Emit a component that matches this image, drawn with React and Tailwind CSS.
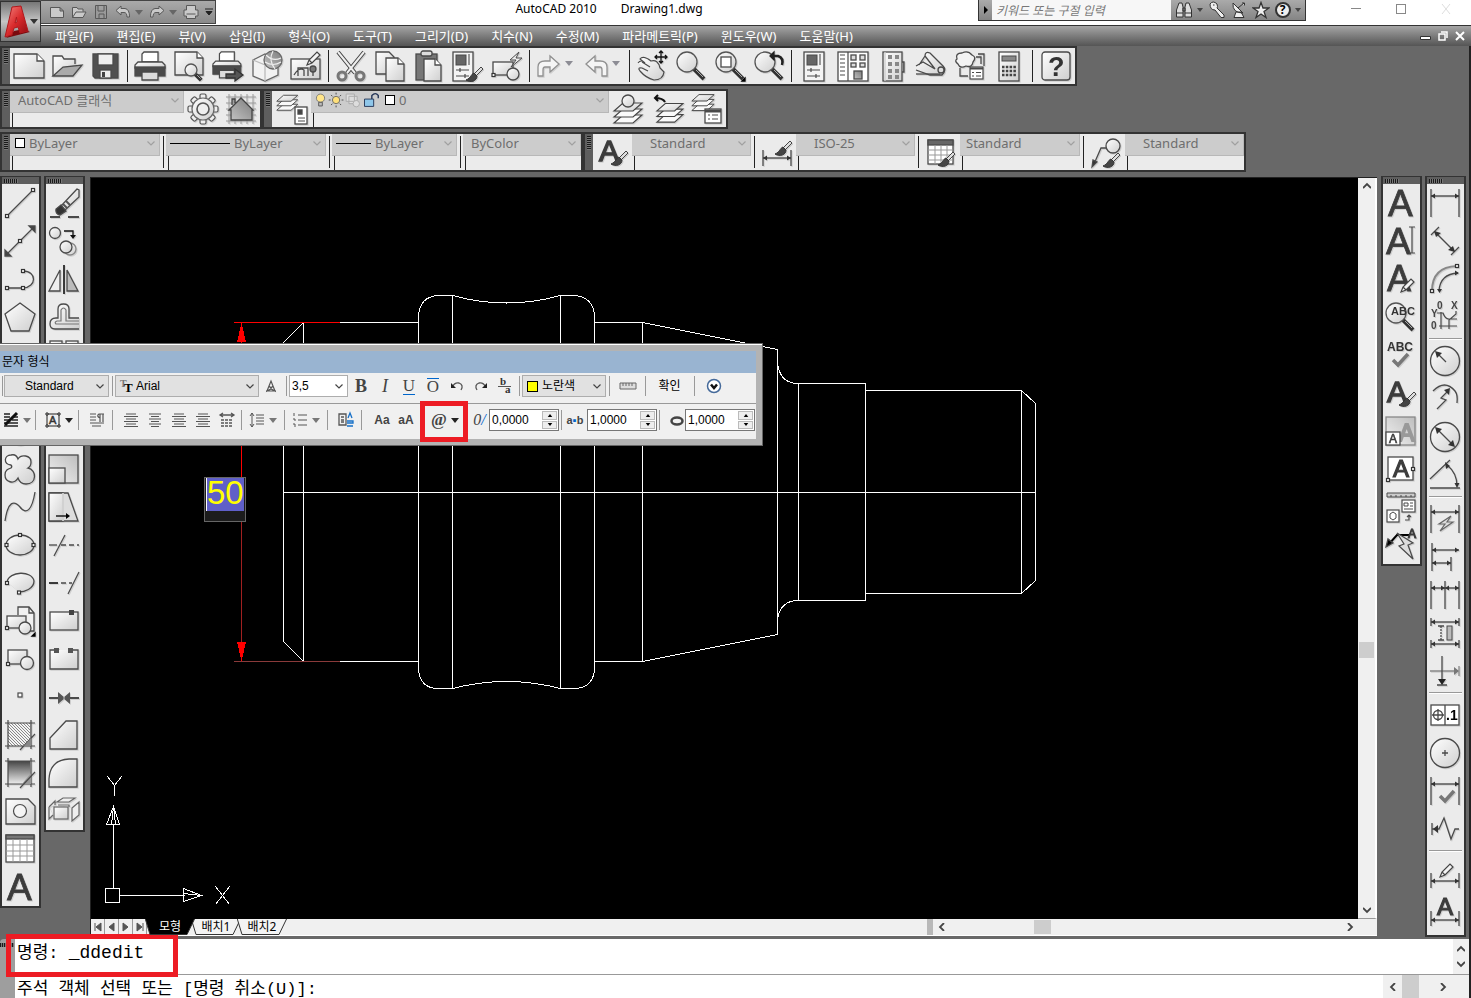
import React from "react";

const G = "url(#shade)";
const D = "url(#dark)";

const Node = ({ x, y }) => <rect x={x - 1.5} y={y - 1.5} width="3" height="3" fill="#fff" stroke="#333" strokeWidth="1.2" />;
const Brush = ({ x = 0, y = 0 }) => (
  <g transform={`translate(${x} ${y})`}>
    <path d="M15 1 L8 8 L10 10 L17 3 Z" fill="#ddd" stroke="#444" strokeWidth="1" />
    <path d="M8 7 C5 8 5 12 0 14 C5 17 11 15 11 10 Z" fill="#444" stroke="#333" strokeWidth="1" />
  </g>
);
const Pencil = ({ x = 0, y = 0 }) => (
  <path transform={`translate(${x} ${y})`} d="M1 14 L3 9 L11 1 L14 4 L6 12 Z M3 9 L6 12" fill="#f4f4f4" stroke="#444" strokeWidth="1.2" />
);
const Lens = ({ cx = 12, cy = 12, r = 10, k = 1 }) => (
  <g>
    <path d={`M${cx + r * 0.7} ${cy + r * 0.7} L${cx + r * 0.7 + 10 * k} ${cy + r * 0.7 + 10 * k}`} stroke="#333" strokeWidth="4" />
    <path d={`M${cx + r * 0.7 + 2} ${cy + r * 0.7 + 1} L${cx + r * 0.7 + 9 * k} ${cy + r * 0.7 + 9 * k - 1}`} stroke="#aaa" strokeWidth="1" />
    <circle cx={cx} cy={cy} r={r} fill={G} stroke="#555" />
  </g>
);
const Layers = ({ x = 0, y = 0, s = 1 }) => (
  <g transform={`translate(${x} ${y}) scale(${s})`} fill="#fafafa" stroke="#444" strokeWidth="1.2">
    <path d="M1 27 L10 19 H29 L20 27 Z" />
    <path d="M1 21 L10 13 H29 L20 21 Z" />
    <path d="M1 15 L10 7 H29 L20 15 Z" fill={G} />
  </g>
);
const ArrowH = ({ x1, x2, y, c = "#333" }) => (
  <g stroke={c} fill={c} strokeWidth="1.2">
    <path d={`M${x1} ${y} H${x2}`} />
    <path d={`M${x1} ${y} l4 -2.5 v5 Z M${x2} ${y} l-4 -2.5 v5 Z`} stroke="none" />
  </g>
);
const Letter = ({ x = 3, y = 29, size = 37, fill = "#3c3c3c", children = "A", w = 0.8 }) => (
  <text x={x} y={y} fontSize={size} fill={fill} stroke={fill} strokeWidth={w} fontFamily="Liberation Sans, sans-serif">{children}</text>
);
const Printer = () => (
  <g>
    <path d="M8 12 V4 L10 2 H24 V12 Z" fill="#fff" />
    <path d="M4 12 H28 L31 15 V18 H1 V15 Z" fill={G} />
    <rect x="1" y="17" width="30" height="9" fill="#4a4a4a" />
    <path d="M8 22 H24 V30 H8 Z" fill="#ddd" />
  </g>
);
const Note = ({ x, y }) => (
  <g>
    <rect x={x} y={y} width="13" height="12" fill="#fff" strokeWidth="1.2" />
    <path d={`M${x} ${y + 1.5} h13`} strokeWidth="2" />
    <path d={`M${x + 2} ${y + 5.5} h2 M${x + 6} ${y + 5.5} h5 M${x + 2} ${y + 9} h2 M${x + 6} ${y + 9} h5`} strokeWidth="1.2" />
  </g>
);
const Panel = () => (
  <g>
    <rect x="6" y="2" width="20" height="29" fill="#f4f4f4" />
    <rect x="9" y="5" width="10" height="10" fill="#666" strokeWidth="1" />
    <path d="M22 4 V15" stroke="#999" strokeWidth="2" />
    <path d="M9 20 H22 M9 26 H22 M13 18 V22 M18 24 V28" strokeWidth="1.2" />
  </g>
);

const icons = {
  new: <g><path d="M1 4 H24 L31 11 V28 H1 Z" fill={G} /><path d="M24 4 V11 H31" fill="#fff" /></g>,
  open: <g><path d="M2 26 V6 H11 L13 9 H24 V14" fill={G} /><path d="M2 26 L12 17 L31 15 L22 26 Z" fill="#aaa" /></g>,
  save: <g><path d="M4 4 H29 V28 H6 L4 26 Z" fill="#505050" /><rect x="9" y="4" width="15" height="11" fill="#eee" /><rect x="11" y="20" width="11" height="8" fill="#eee" /><rect x="13" y="22" width="3" height="5" fill="#444" stroke="none" /></g>,
  print: <Printer />,
  preview: <g><path d="M2 2 H24 L30 8 V25 H2 Z" fill={G} /><path d="M24 2 V8 H30" fill="#fff" /><Lens cx={18} cy={20} r={6} k={0.6} /></g>,
  publish: <g><g transform="scale(.93)"><Printer /></g><path d="M14 24 H23 V19 L31 25 L23 31 V28 H14 Z" fill="#555" stroke="#333" /></g>,
  dwf: <g><path d="M2 10 L14 4 L27 10 V25 L14 31 L2 26 Z" fill="#f2f2f2" stroke="#666" /><path d="M2 10 L14 15 V31" stroke="#bbb" /><circle cx="22" cy="10" r="9" fill={D} stroke="#666" /><path d="M15 5 Q22 12 30 8 M22 1 Q17 10 24 19 M14 12 Q22 17 30 12" stroke="#eee" strokeWidth="1.2" /></g>,
  render: <g><rect x="1" y="9" width="29" height="20" fill={G} /><path d="M4 25 Q9 17 14 20 V26 M8 26 V18 H18 V26 M23 26 V20" /><circle cx="23" cy="19" r="3" fill="#777" /><Pencil x={16} y={1} /></g>,
  cut: <g><path d="M3 2 L20 23 M29 2 L12 23" stroke="#444" strokeWidth="4" /><path d="M3 2 L20 23 M29 2 L12 23" stroke="#eee" strokeWidth="2" /><circle cx="7" cy="26" r="4" strokeWidth="3" stroke="#777" /><circle cx="25" cy="26" r="4" strokeWidth="3" stroke="#777" /></g>,
  copy: <g><path d="M2 2 H15 L20 7 V24 H2 Z" fill={G} /><path d="M12 8 H24 L30 14 V31 H12 Z" fill={G} /><path d="M24 8 V14 H30" fill="#fff" /></g>,
  paste: <g><rect x="3" y="4" width="21" height="26" fill="#777" /><rect x="8" y="1" width="11" height="5" rx="2" fill="#ddd" /><path d="M11 9 H22 L28 15 V31 H11 Z" fill={G} /><path d="M22 9 V15 H28" fill="#fff" /></g>,
  match: <g><g transform="translate(-5 0)"><Panel /></g><Brush x={14} y={16} /></g>,
  block: <g><rect x="2" y="12" width="20" height="13" fill={G} /><circle cx="22" cy="24" r="6" fill={G} /><Node x={2.5} y={25} /><path d="M28 2 L19 10 H25 L20 17 L31 8 H25 Z" fill="#eee" strokeWidth="1" /></g>,
  redo: <path d="M5 26 V17 Q5 11 12 11 H17 V6 L26 14 L17 22 V17 H12 Q10 17 10 20 V26 Z" fill="#f5f5f5" stroke="#909090" />,
  undo: <path d="M27 26 V17 Q27 11 20 11 H15 V6 L6 14 L15 22 V17 H20 Q22 17 22 20 V26 Z" fill="#f5f5f5" stroke="#909090" />,
  pan: <g><path d="M2 13 Q5 9 9 13 L4 9 Q7 5 15 11 Q22 9 24 18 L28 22 Q27 30 18 30 Q10 28 4 21 Q1 17 6 18 L12 21 M6 12 L14 17" fill={G} strokeWidth="1.2" /><path d="M25 1 V13 M19 7 H31 M23 3 L25 1 L27 3 M23 11 L25 13 L27 11 M21 5 L19 7 L21 9 M29 5 L31 7 L29 9" stroke="#111" /></g>,
  zoom: <Lens />,
  zoomWin: <g><Lens /><rect x="7" y="7" width="10" height="10" fill="#fff" /><path d="M31 28 V31 H28 Z" fill="#000" stroke="#000" /></g>,
  zoomPrev: <g><Lens /><path d="M19 6 H25 Q31 8 29 15" stroke="#222" strokeWidth="2.5" /><path d="M21 2 L17 6 L21 10 Z" fill="#222" stroke="#222" /></g>,
  props: <Panel />,
  design: <g><rect x="1" y="2" width="30" height="29" fill="#fff" /><path d="M11 2 V31 M3 5 H8 M3 9 H8 M3 13 H8 M3 17 H8 M3 21 H8 M3 25 H8" strokeWidth="1.2" /><rect x="14" y="5" width="5" height="5" fill="#ddd" /><rect x="23" y="5" width="5" height="5" fill="#ddd" /><rect x="14" y="13" width="5" height="4" fill="#ddd" /><rect x="23" y="13" width="5" height="4" fill="#ddd" /><rect x="17" y="21" width="8" height="8" fill={D} /></g>,
  tool: <g><rect x="7" y="2" width="19" height="29" fill={G} /><path d="M26 12 h2 v10 h-2" fill="#888" /><path d="M9 2 V31" stroke="#ccc" /><g fill="#888" stroke="none"><path d="M12 5h4v4h-4z M19 5h4v4h-4z M12 12h4v4h-4z M19 12h4v4h-4z M12 19h4v4h-4z M19 19h4v4h-4z M12 25h4v4h-4z M19 25h4v4h-4z" /></g></g>,
  sheet: <g><path d="M1 20 L15 25 H27 Q32 20 28 16 L15 3 Q10 1 10 6 L20 19 L8 12 L1 16 M10 6 L4 15" fill={G} /><circle cx="26" cy="20" r="3" fill="#ddd" /><path d="M1 24 H25" /></g>,
  markup: <g><path d="M22 7 H27 V14 M6 18 V26 H14 M24 4 H30 V16" /><path d="M3 9 Q1 3 8 3 Q14 0 18 5 Q23 7 19 12 Q18 18 12 16 Q6 19 4 14 Q0 11 3 9 Z" fill="#f3f3f3" /><g transform="translate(3 3)"><Note x={13} y={14} /></g></g>,
  calc: <g><rect x="6" y="2" width="20" height="29" fill={G} /><rect x="9" y="6" width="14" height="5" fill="#888" strokeWidth="1" /><path d="M9 17H23 M9 21H23 M9 25H23" stroke="#444" strokeWidth="2.6" strokeDasharray="2.5 1.3" /></g>,
  help: <g><rect x="2" y="2" width="28" height="28" rx="3" fill={G} /><text x="8" y="26" fontSize="27" fontWeight="bold" fill="#333" stroke="none" fontFamily="Liberation Sans, sans-serif">?</text></g>,
  gear: <g>{[0, 45, 90, 135, 180, 225, 270, 315].map((a) => <rect key={a} x="13" y="1" width="6" height="8" rx="1.5" fill="#eee" stroke="#555" strokeWidth="1.2" transform={`rotate(${a} 16 16)`} />)}<circle cx="16" cy="16" r="11" fill={G} stroke="#666" strokeWidth="1.2" /><circle cx="16" cy="16" r="6" fill="#eee" stroke="#555" strokeWidth="1.6" /></g>,
  home: <g><path d="M4 1 V31 M10 1 V31 M16 1 V31 M22 1 V31 M28 1 V31 M1 4 H31 M1 10 H31 M1 16 H31 M1 22 H31 M1 28 H31" stroke="#999" strokeWidth="1" /><path d="M7 12 V6 H10 V10 M4 17 L16 5 L28 17 H27 V27 H6 V17 Z" fill={D} stroke="#444" /></g>,
  layerProps: <g><Layers s={0.75} x={0} y={-3} /><rect x="19" y="14" width="12" height="17" fill="#fff" /><path d="M22 17h4v4h-4z" fill="#444" /><path d="M22 25H29 M22 28H29" strokeWidth="1" /></g>,
  layerCur: <g><Layers y={3} /><circle cx="15" cy="8" r="6" fill={G} /></g>,
  layerPrev: <g><Layers x={4} y={4} s={0.93} /><path d="M13 9 Q11 5 3 5 M6 2 L3 5 L6 8" stroke="#111" strokeWidth="2" /></g>,
  layerState: <g><Layers s={0.8} x={0} y={-4} /><g transform="translate(0 2)"><rect x="14" y="14" width="16" height="14" fill="#fff" /><path d="M14 16H30" strokeWidth="3" /><path d="M17 20h2 M21 20h6 M17 24h2 M21 24h6" strokeWidth="1.2" /></g></g>,
  textStyle: <g><Letter x={2} y={25} size={30} w={1.4} /><Brush x={14} y={14} /></g>,
  dimStyle: <g><path d="M2 14 V30 M30 14 V30" /><ArrowH x1={2} x2={30} y={22} /><Brush x={14} y={4} /></g>,
  tableStyle: <g><rect x="3" y="4" width="25" height="24" fill="#fff" /><rect x="3" y="4" width="25" height="5" fill="#666" /><path d="M3 14H28 M3 19H28 M3 24H28 M10 9V28 M16 9V28 M22 9V28" stroke="#999" strokeWidth="1" /><Brush x={13} y={15} /></g>,
  leaderStyle: <g><circle cx="23" cy="10" r="7" fill={G} /><path d="M16 12 H11 L4 28" /><path d="M2 31 L3 24 L7 26 Z" fill="#333" /><Brush x={13} y={16} /></g>,

  line: <g><path d="M3 29 L29 3" /><Node x={3} y={29} /><Node x={29} y={3} /></g>,
  xline: <g><path d="M3 29 L29 3" /><path d="M1 31 V25 L7 31 Z M31 1 H25 L31 7 Z" fill="#444" /><Node x={16} y={16} /></g>,
  pline: <g><path d="M3 25 H19 C33 24 33 8 19 8" /><Node x={3} y={25} /><Node x={19} y={25} /><Node x={19} y={8} /></g>,
  polygon: <path d="M16 2 L31 13 L25 30 H7 L1 13 Z" fill={G} />,
  rect: <rect x="2" y="7" width="28" height="18" fill={G} />,
  arc: <path d="M3 29 Q5 5 29 4" />,
  circle: <circle cx="16" cy="16" r="14" fill={G} />,
  cloud: <path d="M7 12 C-1 11 0 2 7 2 C11 1 13 3 14 6 C17 1 27 2 27 9 C27 12 26 14 24 15 C33 17 33 31 22 31 C17 31 15 28 14 25 C10 32 1 29 1 22 C1 17 4 16 7 15 C8 14 8 13 7 12 Z" fill={G} />,
  spline: <path d="M1 30 C4 10 10 9 16 16 C22 24 28 20 31 1" />,
  ellipse: <g><ellipse cx="16" cy="16" rx="14" ry="10" fill={G} /><Node x={16} y={6} /><Node x={2.5} y={16} /><Node x={29.5} y={16} /></g>,
  ellipseArc: <g><path d="M3 15 C5 4 28 3 30 14 C30 22 20 25 15 25" fill={G} /><Node x={3} y={16} /><Node x={15} y={25.5} /></g>,
  insert: <g><path d="M14 10 V2 H25 L30 8 V26 H20" fill="#f0f0f0" /><path d="M25 2 V8 H30" /><rect x="3" y="11" width="19" height="12" fill={G} /><circle cx="21" cy="23" r="6" fill={G} /><path d="M31 28 V31 H28 Z" fill="#000" stroke="#000" /><Node x={3} y={23} /></g>,
  makeBlock: <g><rect x="4" y="7" width="19" height="14" fill={G} /><circle cx="23" cy="20" r="6.5" fill={G} /><Node x={4} y={21} /></g>,
  point: <rect x="14" y="12" width="4" height="4" fill="#fff" strokeWidth="1.2" />,
  hatch: <g><rect x="4" y="4" width="22" height="23" fill="url(#hatchp)" stroke="none" /><path d="M4 1 V30 M1 4 H31 M27 1 V30 M1 27 H31 M16 31 L31 15" strokeWidth="1.2" /><path d="M20 27 L27 19 V27 Z" fill="#888" stroke="none" /></g>,
  gradient: <g><rect x="4" y="4" width="22" height="23" fill="url(#deep)" stroke="none" /><path d="M4 1 V30 M1 4 H31 M27 1 V30 M1 27 H31" strokeWidth="1.2" /><path d="M18 27 L27 16 V27 Z" fill="#999" stroke="none" /><path d="M16 31 L31 15" strokeWidth="1.2" /></g>,
  region: <g><path d="M2 4 H24 L31 11 V29 H2 Z" fill={G} /><circle cx="16" cy="16" r="6.5" fill="#f4f4f4" strokeWidth="1.2" /></g>,
  table: <g><rect x="2" y="2" width="28" height="27" fill="#fff" /><rect x="2" y="2" width="28" height="4" fill="#777" /><path d="M2 12H30 M2 18H30 M2 23H30 M9 6V29 M16 6V29 M23 6V29" stroke="#999" strokeWidth="1" /></g>,
  mtext: <Letter />,

  erase: <g><path d="M2 30 H12 M20 30 H31" strokeWidth="2" /><path d="M29 2 L13 19 L17 23 L31 10 V3 Z" fill={G} /><path d="M15 17 L19 21 M18 14 L22 18" stroke="#555" strokeWidth="2" /><path d="M13 18 L8 22 Q7 27 12 28 L18 24 Z" fill="#333" /></g>,
  copyObj: <g><circle cx="7" cy="8" r="5.5" fill={G} /><circle cx="22" cy="24" r="6" fill={G} stroke="#888" /><circle cx="18" cy="22" r="6" fill={G} /><path d="M16 6 H25 V11" stroke="#111" /><path d="M22 10 H28 L25 14 Z" fill="#111" stroke="none" /></g>,
  mirror: <g><path d="M12 7 V28 H1 Z" fill="#eee" /><path d="M19 7 V28 H30 Z" fill="#bbb" /><path d="M16 2 V31" stroke="#000" strokeWidth="1.5" /></g>,
  offset: <g><path d="M31 28 H7 Q2 28 2 23 Q2 17 8 17 H10 V8 Q10 3 15.5 3 Q21 3 21 8 V17 H31" fill={G} /><path d="M31 23 H8 Q6 21 9 20 H13 V9 Q15.5 5 18 9 V20 H31" stroke="#777" strokeWidth="1.2" /></g>,
  array: <g><rect x="2" y="2" width="12" height="12" fill={G} /><rect x="18" y="2" width="12" height="12" fill={G} /><rect x="2" y="18" width="12" height="12" fill={G} /><rect x="18" y="18" width="12" height="12" fill={G} /></g>,
  move: <path d="M16 2 V30 M2 16 H30" />,
  rotate: <path d="M16 3 A13 13 0 1 0 29 16" />,
  scale: <g><rect x="1" y="2" width="29" height="28" fill="url(#mid)" /><rect x="1" y="15" width="16" height="15" fill={G} /></g>,
  stretch: <g><path d="M1 2 H20 L30 30 H1 Z" fill="#ddd" /><path d="M1 2 H15 V30 H1 Z" fill={G} /><path d="M15 2 V30" stroke="#fff" /><path d="M8 25 H20" stroke="#000" /><path d="M18 22 L22 25 L18 28 Z" fill="#000" stroke="none" /></g>,
  trim: <g><path d="M1 16 H9" /><path d="M13 16 H31" strokeDasharray="5 3" /><path d="M6 27 L17 6" /></g>,
  extend: <g><path d="M1 16 H10" stroke="#000" strokeWidth="1.5" /><path d="M13 16 H24" strokeDasharray="5 3" /><path d="M20 27 L31 5" /></g>,
  breakPt: <g><rect x="2" y="7" width="28" height="18" fill={G} /><rect x="21" y="5" width="5" height="5" fill="#444" stroke="none" /></g>,
  breakGap: <g><path d="M8 7 H2 V26 H30 V7 H24" fill={G} /><path d="M6 5h5v5h-5z M20 5h5v5h-5z" fill="#555" stroke="none" /></g>,
  join: <g><path d="M1 17 H12 M20 17 H31" strokeWidth="2" /><path d="M10 11 L17 17 L10 23 Z M22 11 L15 17 L22 23 Z" fill="#555" stroke="none" /></g>,
  chamfer: <path d="M2 30 V19 L18 2 H29 V30 Z" fill={G} />,
  fillet: <path d="M1 30 V22 Q2 3 21 2 H29 V30 Z" fill={G} />,
  explode: <g stroke="#666" strokeWidth="1.2"><path d="M9 7 L15 3 H27 L21 7 Z M1 12 L7 6 V10 M1 12 V24 L5 20 M24 13 L31 7 V20 L24 26 Z M10 10 H21 V12" fill="#eee" /><rect x="6" y="12" width="14" height="12" fill={G} /></g>,

  textEdit: <g><Letter x={1} size={37} /><path d="M24 2 H30 M27 2 V28 M24 28 H30" strokeWidth="1.2" /></g>,
  textPen: <g><Letter x={2} y={28} size={36} /><Pencil x={15} y={15} /></g>,
  find: <g><Lens cx={11} cy={12} r={10} /><text x="6" y="14" fontSize="11" fontWeight="bold" fill="#333" stroke="none" fontFamily="Liberation Sans, sans-serif">ABC</text></g>,
  spell: <g><text x="2" y="12" fontSize="12" fontWeight="bold" fill="#333" stroke="none" fontFamily="Liberation Sans, sans-serif">ABC</text><path d="M8 21 L13 26 L23 15" stroke="#777" strokeWidth="3.5" /></g>,
  scaleText: <g><rect x="1" y="2" width="29" height="28" fill="url(#mid)" stroke="#888" /><Letter x={14} y={26} size={23} fill="#999" w={2} /><rect x="1" y="17" width="14" height="13" fill="#fff" /><Letter x={4} y={28} size={12} w={0.6} /></g>,
  justify: <g><rect x="3" y="4" width="25" height="23" fill="#fff" /><Letter x={8} y={24} size={24} w={1.2} /><Node x={3} y={27} /><Node x={28} y={16} /></g>,
  spaceTrans: <g><path d="M2 2 H30 V6 H2 Z M6 4 V6 M11 4 V6 M16 4 V6 M21 4 V6 M26 4 V6" strokeWidth="1" fill="#ccc" /><rect x="17" y="9" width="13" height="12" fill="#fff" strokeWidth="1.2" /><path d="M19 12h4v3h-4z M25 12h3 M25 15h3 M19 18h9" strokeWidth="1" /><rect x="2" y="19" width="12" height="12" fill="#fff" strokeWidth="1.2" /><path d="M5 23 L8 21 L11 23 V27 L8 29 L5 27 Z" strokeWidth="1" /><path d="M20 29 H24 V24 M22 26 L24 24 L26 26" strokeWidth="1.2" /></g>,
  annoUpdate: <g><path d="M3 16 L12 6 H24" stroke="#000" strokeWidth="2" /><path d="M1 18 L3 10 L8 14 Z" fill="#000" /><Letter x={23} y={9} size={12} w={1} /><path d="M12 4 L28 14 L23 16 L28 30 L14 17 L19 15 Z" fill="#ddd" strokeWidth="1.2" /></g>,

  dLinear: <g><path d="M2 2 V30 M30 2 V30" /><ArrowH x1={2} x2={30} y={9} /></g>,
  dAligned: <g><path d="M2 10 L10 2 M22 30 L30 22 M6 7 L25 26" /><path d="M5 6 L12 8 L7 12 Z M26 27 L19 25 L24 21 Z" fill="#333" stroke="none" /></g>,
  dArc: <g><path d="M3 28 Q3 4 28 3" stroke="#888" strokeWidth="2" /><path d="M10 28 Q11 11 29 10" /><path d="M8 26 H13 L10.5 30 Z M26 7.500 V12.500 L30 10 Z" fill="#333" stroke="none" /><Node x={3} y={28} /><Node x={28} y={3} /></g>,
  dOrd: <g fontFamily="Liberation Sans, sans-serif"><g fontSize="10" fontWeight="bold" fill="#444" stroke="none"><text x="8" y="8">0</text><text x="22" y="8">X</text><text x="2" y="16">Y</text><text x="2" y="28">0</text></g><path d="M12 11 V28 M10 25 H28 M8 12 H14 Q16 18 20 18 H28 M27 10 V13 L20 19 V28" strokeWidth="1.2" /></g>,
  dRadius: <g><circle cx="16" cy="16" r="14.5" fill={G} /><path d="M8 8 L17 17" /><path d="M6 6 L13 8 L8 13 Z" fill="#333" stroke="none" /></g>,
  dJog: <g><path d="M4 8 Q16 -4 26 8 Q29 12 28 20 M8 26 L17 17 L12 15 L19 8" /><path d="M21 5 L20 12 L15 7 Z" fill="#333" stroke="none" /></g>,
  dDia: <g><circle cx="16" cy="16" r="14.5" fill={G} /><path d="M8 8 L24 24" /><path d="M6 6 L13 8 L8 13 Z M26 26 L19 24 L24 19 Z" fill="#333" stroke="none" /></g>,
  dAng: <g><path d="M1 29 H31 M1 20 L21 1 M18 6 Q28 14 28 27" /><path d="M16 3 L21 7 L17 10 Z M25.500 24 H30.500 L28 29 Z" fill="#333" stroke="none" /></g>,
  dQuick: <g><path d="M2 2 V30 M30 2 V30" /><ArrowH x1={2} x2={30} y={9} /><path d="M22 13 L10 21 H16 L11 28 L24 19 H18 Z" fill="#ddd" stroke="#666" strokeWidth="1.2" /></g>,
  dBase: <g><path d="M3 2 V30 M22 16 V30" /><ArrowH x1={3} x2={30} y={9} /><ArrowH x1={3} x2={22} y={22} /></g>,
  dCont: <g><path d="M2 2 V30 M16 2 V30 M30 2 V30" /><ArrowH x1={2} x2={16} y={9} /><ArrowH x1={16} x2={30} y={9} /></g>,
  dSpace: <g><path d="M2 1 V9 M30 1 V9 M2 23 V31 M30 23 V31" /><ArrowH x1={2} x2={30} y={5} /><ArrowH x1={2} x2={30} y={27} /><path d="M12 9 V23" strokeDasharray="2 1" /><path d="M9 9 H15 M9 23 H15" /><rect x="18" y="9" width="5" height="14" fill="#bbb" strokeWidth="1" /></g>,
  dBreak: <g><path d="M1 16 H29 M30 11 V21" stroke="#888" /><path d="M25 12 L30 16 L25 20 Z" fill="#777" stroke="none" /><path d="M13 1 V27 M8 30 H18" /><path d="M9 24 H17 L13 30 Z" fill="#222" stroke="none" /></g>,
  tol: <g><rect x="2" y="6" width="28" height="20" fill="#fff" /><path d="M16 6 V26 M3 16 H15 M9 10 V22" /><circle cx="9" cy="16" r="4.5" /><text x="17" y="21" fontSize="14" fontWeight="bold" fill="#000" stroke="none" fontFamily="Liberation Sans, sans-serif">.1</text></g>,
  center: <g><circle cx="16" cy="16" r="14.5" fill={G} /><path d="M16 13 V19 M13 16 H19" /></g>,
  inspect: <g><path d="M2 2 V30 M30 2 V30" /><ArrowH x1={2} x2={30} y={9} /><path d="M11 21 L16 26 L25 16" stroke="#777" strokeWidth="3.5" /></g>,
  jogLine: <g><path d="M3 10 V22 M3 16 H10 L15 5 L22 26 L26 16 H30" /><path d="M4 16 L9 12 V20 Z" fill="#333" stroke="none" /></g>,
  dEdit: <g><path d="M2 16 V31 M30 16 V31" /><ArrowH x1={2} x2={30} y={24} /><Pencil x={10} y={6} /></g>,
  dText: <g><path d="M2 16 V31 M30 16 V31" /><ArrowH x1={2} x2={30} y={25} /><Letter x={8} y={20} size={24} w={1.2} /></g>,
};

function Icon({ name, size = "size-8" }) {
  return (
    <svg viewBox="0 0 32 32" className={`${size} shrink-0 overflow-visible drop-shadow-[1px_1px_0_rgba(0,0,0,0.12)]`} fill="none" stroke="#4a4a4a" strokeWidth="1.3" aria-hidden="true">
      {icons[name]}
    </svg>
  );
}

function Defs() {
  return (
    <svg className="absolute size-0" aria-hidden="true">
      <defs>
        <linearGradient id="shade" x1="0" y1="0" x2="1" y2="1"><stop offset="0" stopColor="#ffffff" /><stop offset="1" stopColor="#cfcfcf" /></linearGradient>
        <linearGradient id="mid" x1="1" y1="0" x2="0" y2="1"><stop offset="0" stopColor="#bdbdbd" /><stop offset="1" stopColor="#f2f2f2" /></linearGradient>
        <linearGradient id="dark" x1="0" y1="1" x2="1" y2="0"><stop offset="0" stopColor="#c4c4c4" /><stop offset="1" stopColor="#7c7c7c" /></linearGradient>
        <linearGradient id="deep" x1="0" y1="0" x2="0" y2="1"><stop offset="0" stopColor="#444" /><stop offset="1" stopColor="#eee" /></linearGradient>
        <linearGradient id="red" x1="0" y1="0" x2="1" y2="1"><stop offset="0" stopColor="#f58a84" /><stop offset=".5" stopColor="#d92a2c" /><stop offset="1" stopColor="#8c0a10" /></linearGradient>
        <pattern id="hatchp" width="3" height="3" patternUnits="userSpaceOnUse"><rect width="3" height="3" fill="#f4f4f4" /><path d="M0 0 L3 3" stroke="#888" strokeWidth="1" /></pattern>
      </defs>
    </svg>
  );
}

const Tool = ({ name, w = "w-[39px]" }) => (
  <button type="button" aria-label={name} className={`${w} flex shrink-0 items-center justify-center`}><Icon name={name} /></button>
);
const Sep = ({ w = "w-1.5" }) => <span className={`${w} flex shrink-0 justify-center self-stretch py-0.5`}><span className="w-px bg-[#222]" /></span>;
const Caret = ({ c = "text-[#8c8c94]" }) => (
  <svg viewBox="0 0 8 5" className={`h-[5px] w-2 shrink-0 ${c}`} aria-hidden="true"><path d="M0 0 H8 L4 5 Z" fill="currentColor" /></svg>
);
const Chevron = ({ className = "" }) => (
  <svg viewBox="0 0 8 5" className={`pointer-events-none h-[5px] w-2 shrink-0 ${className}`} aria-hidden="true"><path d="M.5 .5 L4 4 L7.5 .5" fill="none" stroke="currentColor" strokeWidth="1.2" /></svg>
);
const Dots = ({ vertical }) => vertical
  ? <span className="w-1 bg-[repeating-linear-gradient(#1a1a1a_0_1px,#777_1px_2px)]" />
  : <span className="h-1 w-3.5 bg-[repeating-linear-gradient(to_right,#1a1a1a_0_1px,#777_1px_2px)]" />;

function Bar({ children }) {
  return (
    <div role="toolbar" className="flex h-10 shrink-0 border-2 border-[#333] bg-[#ebebeb]">
      <span className="flex w-2 shrink-0 justify-center bg-[#5e5e5e] pt-0.5 pb-5"><Dots vertical /></span>
      {children}
    </div>
  );
}

function Combo({ label, value, w, pad = "pl-2", children }) {
  return (
    <div className={`${w} flex shrink-0 flex-col`}>
      <label className="relative flex h-[22px] shrink-0 items-center border-r border-b border-[#b8b8b8] bg-[#cccccc] pb-[3px]">
        <span className={`flex items-center gap-1 ${pad}`}>{children}</span>
        <select aria-label={label} defaultValue={value} className="h-[18px] min-w-0 flex-1 appearance-none bg-transparent px-1 text-[13px] leading-[18px] text-[#6e6e6e]">
          <option>{value}</option>
        </select>
        <Chevron className="mr-1 text-[#a0a0a0]" />
      </label>
      <span className="ml-0.5 h-3.5 w-px bg-[#222]" />
    </div>
  );
}

const Swatch = () => <span className="size-2.5 border border-black bg-white" />;

function Quick({ d, fill = "#c9c9c9" }) {
  return <svg viewBox="0 0 16 16" className="size-4 shrink-0" fill={fill} stroke="#585858" aria-hidden="true"><path d={d} /></svg>;
}

function Header() {
  const menus = ["파일(F)", "편집(E)", "뷰(V)", "삽입(I)", "형식(O)", "도구(T)", "그리기(D)", "치수(N)", "수정(M)", "파라메트릭(P)", "윈도우(W)", "도움말(H)"];
  return (
    <header className="flex h-[46px] shrink-0 bg-white">
      <div className="flex w-[41px] shrink-0 flex-col bg-[#555]">
        <button type="button" aria-label="Application menu" className="mt-px flex h-[41px] items-center justify-between border border-[#333] bg-gradient-to-b from-[#777] via-[#c6c6c6] to-[#777] px-[3px]">
          <svg viewBox="0 0 26 34" className="h-[34px] w-[26px] overflow-visible" aria-hidden="true">
            <path d="M2 33 L26 27 L20 24 L10 26 Z" fill="#7a0a0e" />
            <path d="M8 2 L17 1 L24 26 L16 28 L14 22 L10 23 L8 30 L1 32 Z M11 18 L13 17 L12.500 12 Z" fill="url(#red)" fillRule="evenodd" stroke="#b0181c" strokeWidth="1" />
          </svg>
          <Caret c="text-[#333]" />
        </button>
      </div>
      <div className="flex min-w-0 flex-1 flex-col">
        <div className="flex h-[25px] shrink-0">
          <div className="flex h-6 w-[175px] shrink-0 items-center gap-1.5 border border-l-0 border-[#444] bg-gradient-to-b from-[#aaa] to-[#8a8a8a] pl-2">
            <Quick d="M1.5 3.5 H11 L14.5 7 V13.5 H1.5 Z M11 3.5 V7 H14.5" />
            <Quick d="M1.5 13.5 V3.5 H6 L7 5 H12 V7.5 M1.5 13.5 L5 8 H15 L12 13.5 Z" />
            <Quick d="M2.5 1.5 H13.5 V14.5 H2.5 Z M5 1.5 V7 H11 V1.5 M6 14 V10 H11 V14" fill="#999" />
            <span className="flex items-center gap-1"><Quick d="M1 6.5 L6 2 V4.5 H10 Q14.5 5 14.5 13 H12 Q12 8.5 9 8.5 H6 V11 Z" /><Caret c="text-[#666]" /></span>
            <span className="flex items-center gap-1"><Quick d="M15 6.5 L10 2 V4.5 H6 Q1.5 5 1.5 13 H4 Q4 8.5 7 8.5 H10 V11 Z" /><Caret c="text-[#666]" /></span>
            <Quick d="M3.5 6 V1.5 H12.5 V6 H15 V12 H12.5 V14.5 H3.5 V12 H1 V6 Z M3.5 10 H12.5" />
            <svg viewBox="0 0 8 8" className="size-2 shrink-0" aria-hidden="true"><path d="M0 1 H8 M1 3.5 H7 L4 7 Z" stroke="#222" fill="#222" /></svg>
          </div>
          <h1 className="flex flex-1 justify-center gap-6 pl-6 text-[12px] leading-[18px] text-black"><span>AutoCAD 2010</span><span>Drawing1.dwg</span></h1>
          <div className="flex h-[21px] w-[328px] shrink-0 items-center border border-t-0 border-[#333] bg-gradient-to-b from-[#aaa] to-[#858585]">
            <span className="flex w-[13px] shrink-0 justify-center"><svg viewBox="0 0 4 8" className="h-2 w-1" aria-hidden="true"><path d="M0 0 L4 4 L0 8 Z" /></svg></span>
            <input aria-label="검색" placeholder="키워드 또는 구절 입력" className="h-5 w-[179px] bg-[#f7f7f7] px-1 text-[12px] italic placeholder:text-[#777]" />
            <span className="flex flex-1 items-center justify-between px-1">
              <svg viewBox="0 0 18 18" className="size-[18px]" fill="#ddd" stroke="#333" aria-hidden="true"><path d="M4 2 H7 L8 6 V16 H1.5 V9 Z M11 2 H14 L16.5 9 V16 H10 V6 Z M8 7 H10 V10 H8 Z M1.5 12 H8 M10 12 H16.5" /></svg>
              <svg viewBox="0 0 6 4" className="h-1 w-1.5" aria-hidden="true"><path d="M0 0 H6 L3 4 Z" fill="#444" /></svg>
              <svg viewBox="0 0 18 18" className="size-[18px]" fill="#eee" stroke="#333" aria-hidden="true"><path d="M2 3 Q5 -1 9 3 Q10 6 9 7 L16 14 V16.5 H13 L7 9 Q2 9 2 3 Z M5 4 h1.5" /></svg>
              <svg viewBox="0 0 18 18" className="size-[18px]" fill="#eee" stroke="#333" aria-hidden="true"><path d="M6 11 L4 16.5 H14 L11 11 Z M3 2 Q2 12 13 12 Z M8 7 L14 2 M12 2 H14.500 V4.500" /></svg>
              <svg viewBox="0 0 18 18" className="size-[18px]" fill="#eee" stroke="#333" strokeWidth="1.3" aria-hidden="true"><path d="M9 1.5 L11 7 H17 L12 10.5 L14 16.5 L9 13 L4 16.5 L6 10.5 L1 7 H7 Z" /></svg>
              <span className="flex size-4 items-center justify-center rounded-full border-2 border-[#333] bg-[#eee] text-[12px] leading-3 font-bold">?</span>
              <svg viewBox="0 0 6 4" className="h-1 w-1.5" aria-hidden="true"><path d="M0 0 H6 L3 4 Z" fill="#444" /></svg>
            </span>
          </div>
          <div className="flex w-[165px] shrink-0 items-start justify-end gap-[35px] pt-1 pr-5">
            <button type="button" aria-label="Minimize" className="h-[5px] w-2.5 border-b border-[#888]" />
            <button type="button" aria-label="Maximize" className="size-2.5 border border-[#888]" />
            <button type="button" aria-label="Close"><svg viewBox="0 0 10 10" className="size-2.5" aria-hidden="true"><path d="M1 0 L9 10 M9 0 L1 10" stroke="#ddd" /></svg></button>
          </div>
        </div>
        <nav className="flex h-[21px] shrink-0 items-center gap-[23px] border-t border-[#333] bg-gradient-to-b from-[#a6a6a6] to-[#555] pl-3.5 text-[13px] leading-4 text-white">
          {menus.map((m) => <button type="button" key={m} className="shrink-0">{m}</button>)}
          <span className="flex flex-1 items-center justify-end gap-[7px] pr-1.5">
            <svg viewBox="0 0 11 10" className="h-2.5 w-[11px]" aria-hidden="true"><path d="M.5 5.5 h10 v3 h-10 z" fill="#fff" stroke="#333" /></svg>
            <svg viewBox="0 0 10 10" className="size-2.5" aria-hidden="true"><path d="M3 1 H9 V7 M1 3 H7 V9 H1 Z" fill="none" stroke="#fff" strokeWidth="1.5" /></svg>
            <svg viewBox="0 0 10 10" className="size-2.5" aria-hidden="true"><path d="M1 1 L9 9 M9 1 L1 9" stroke="#fff" strokeWidth="2" /></svg>
          </span>
        </nav>
      </div>
    </header>
  );
}

function Toolbars() {
  const set = (names, w) => names.map((n) => <Tool key={n} name={n} w={w} />);
  return (
    <div className="flex shrink-0 flex-col items-start gap-[3px]">
      <Bar>
        {set(["new", "open", "save"], "w-[38px]")}<Sep />
        {set(["print", "preview", "publish", "dwf", "render"])}<Sep />
        {set(["cut", "copy", "paste", "match", "block"])}<Sep />
        <Tool name="redo" w="w-[33px]" /><span className="flex w-3.5 items-center pb-1.5"><Caret /></span>
        <Tool name="undo" w="w-[33px]" /><span className="flex w-3.5 items-center pb-1.5"><Caret /></span><Sep />
        {set(["pan", "zoom", "zoomWin", "zoomPrev"])}<Sep />
        {set(["props", "design", "tool", "sheet", "markup", "calc"])}<Sep w="w-2" />
        <Tool name="help" />
      </Bar>
      <div className="flex">
        <Bar>
          <Combo label="작업공간" value="AutoCAD 클래식" w="w-[174px]" pad="pl-1" />
          {set(["gear", "home"], "w-[38px]")}
        </Bar>
        <Bar>
          <Tool name="layerProps" />
          <Combo label="도면층" value="0" w="w-[298px]" pad="pl-1">
            <svg viewBox="0 0 72 16" className="h-4 w-[66px]" aria-hidden="true">
              <circle cx="6" cy="6" r="4.5" fill="#ffe58a" stroke="#777" /><path d="M4 10.5 h4 v4 h-4 z" fill="#bbb" stroke="#555" />
              <circle cx="23" cy="8" r="4" fill="#ffe07a" stroke="#666" /><path d="M23 0 V2 M23 14 V16 M15 8 H17 M29 8 H31 M17.5 2.5 L19 4 M27 12 L28.5 13.5 M28.5 2.5 L27 4 M17.5 13.5 L19 12" stroke="#444" />
              <path d="M34 1.5 h9 v8 h-9 z M37 4 h9 v8 h-9 z" fill="#ddd" stroke="#aaa" /><circle cx="45" cy="12" r="3.5" fill="#ddd" stroke="#aaa" />
              <path d="M54 7 h10 v8 h-10 z" fill="#8fc7ea" stroke="#235" /><path d="M62 7 V3 Q66 -1 69 3 V6" fill="none" stroke="#235" strokeWidth="1.5" />
            </svg>
            <Swatch />
          </Combo>
          {set(["layerCur", "layerPrev", "layerState"])}
        </Bar>
      </div>
      <div className="flex">
        <Bar>
          <Combo label="색상" value="ByLayer" w="w-[150px]" pad="pl-[5px]"><Swatch /></Combo><Sep />
          <Combo label="선종류" value="ByLayer" w="w-[160px]" pad="pl-1"><span className="h-px w-[60px] bg-black" /></Combo><Sep />
          <Combo label="선가중치" value="ByLayer" w="w-[125px]" pad="pl-1"><span className="h-px w-[35px] bg-black" /></Combo><Sep />
          <Combo label="플롯 스타일" value="ByColor" w="w-[118px]" pad="pl-1" />
        </Bar>
        <Bar>
          <Tool name="textStyle" /><Combo label="문자 스타일" value="Standard" w="w-[119px]" pad="pl-3.5" /><Sep />
          <Tool name="dimStyle" /><Combo label="치수 스타일" value="ISO-25" w="w-[119px]" pad="pl-3.5" /><Sep />
          <Tool name="tableStyle" /><Combo label="표 스타일" value="Standard" w="w-[120px]" pad="pl-0.5" /><Sep />
          <Tool name="leaderStyle" /><Combo label="지시선 스타일" value="Standard" w="w-[119px]" pad="pl-3.5" />
        </Bar>
      </div>
    </div>
  );
}

function Palette({ groups }) {
  return (
    <div role="toolbar" className="flex max-h-full w-[41px] shrink-0 flex-col overflow-hidden border-2 border-t-0 border-[#333] bg-[#ebebeb] [&>button]:pr-px">
      <span className="flex h-2 shrink-0 items-center border-t border-[#333] bg-[#5e5e5e] pl-0.5"><Dots /></span>
      {groups.map((g, i) => (
        <React.Fragment key={g[0]}>
          {i > 0 && <span className="mx-0.5 flex h-1.5 shrink-0 items-center"><span className="h-0.5 w-full border-t border-b border-t-[#999] border-b-white" /></span>}
          {g.map((n) => <button type="button" key={n} aria-label={n} className="flex h-[38px] shrink-0 items-center justify-center"><Icon name={n} /></button>)}
        </React.Fragment>
      ))}
    </div>
  );
}

function Drawing() {
  return (
    <div className="relative min-h-0 min-w-0 flex-1 overflow-hidden bg-black">
      <svg className="absolute inset-0 h-full w-full" aria-label="도면">
        <g transform="translate(-91 -178)" fill="none" stroke="#fff" strokeWidth="1" shapeRendering="crispEdges">
          <path d="M283.5 492.5 H1035.5 M303.5 322.5 L283.5 342.5 V641.5 L303.5 661.5 Z M339.5 322.5 H418.5 M339.5 661.5 H418.5" />
          <path d="M418.5 672.5 V316.5 Q419.5 296.5 438.5 295.5 H452.5 Q506.5 310.5 560.5 295.5 H575.5 Q593.5 297.5 594.5 316.5 V668.5 Q593.5 687.5 575.5 688.5 H560.5 Q506.5 674.5 452.5 688.5 H438.5 Q419.5 688.5 418.5 668.5 M452.5 295.5 V688.5 M560.5 295.5 V688.5" />
          <path d="M594.5 322.5 H642.5 V661.5 H594.5 M642.5 322.5 L777.5 349.5 V634.5 L642.5 661.5" />
          <path d="M777.5 362.5 Q779.5 383.5 798.5 383.5 H865.5 V600.5 H798.5 Q779.5 600.5 777.5 620.5 M798.5 383.5 V600.5" />
          <path d="M865.5 390.5 H1021.5 L1035.5 403.5 V580.5 L1021.5 593.5 H865.5 M1021.5 390.5 V593.5" />
          <path d="M233.5 322.5 H339.5 M241.5 340.5 V477.5" stroke="#f00" />
          <path d="M233.5 661.5 H339.5" stroke="#8a3a3a" />
          <path d="M241.5 521.5 V642.5" stroke="#a02020" />
          <path d="M241.5 323 L237 342 H246 Z M241.5 661 L237 642 H246 Z" fill="#f00" stroke="none" />
          <path d="M113.5 888.5 V824.5 M119.5 895.5 H184.5 M105.5 888.5 H119.5 V902.5 H105.5 Z M113.5 806.5 L106.5 824.5 H119.5 Z M113.5 806.5 L111.5 824.5 M113.5 806.5 L115.5 824.5 M201.5 895.5 L183.5 888.5 V901.5 Z M201.5 895.5 L183.5 893.5" />
          <path d="M107.5 776.5 L114.5 785.5 L121.5 776.5 M114.5 785.5 V795.5 M215.5 886.5 L229.5 904.5 M229.5 886.5 L215.5 904.5" />
        </g>
      </svg>
      <div className="absolute top-[299px] left-[113px] h-[45px] w-[42px] border border-[#666] bg-[#1c1c1c] pl-px">
        <span className="block h-[33px] w-[38px] border-l border-white bg-[#5f5fc8] font-[Liberation_Sans] text-[33px] leading-[29px] text-[#ff0]">50</span>
      </div>
    </div>
  );
}

function ArrowGlyph({ d }) {
  return <svg viewBox="0 0 8 8" className="size-2 shrink-0" fill="none" stroke="#444" strokeWidth="1.8" aria-hidden="true"><path d={d} /></svg>;
}
const UP = "M0 6 L4 2 L8 6", DOWN = "M0 2 L4 6 L8 2", LEFT = "M6 0 L2 4 L6 8", RIGHT = "M2 0 L6 4 L2 8";

function Tab({ children, active }) {
  return (
    <button type="button" className={`relative h-4 w-[46px] shrink-0 text-[12px] leading-4 ${active ? "z-10 text-white" : "text-black"}`}>
      <svg viewBox="0 0 50 16" className="absolute top-0 -left-0.5 h-4 w-[50px]" aria-hidden="true">
        <path d="M0 -1 L5 15.5 H42 L50 -1" fill={active ? "#000" : "#f4f4f4"} stroke="#333" />
      </svg>
      <span className="relative">{children}</span>
    </button>
  );
}

function Viewport() {
  return (
    <div className="mt-px mb-px ml-[5px] flex min-w-0 flex-1 flex-col border-t border-l border-[#222]">
      <div className="flex min-h-0 flex-1">
        <Drawing />
        <div className="flex w-[19px] shrink-0 flex-col items-center border-r-2 border-b border-r-white border-b-[#999] bg-[#f0f0f0] py-1">
          <ArrowGlyph d={UP} />
          <span className="flex-[8]" /><span className="h-4 w-[15px] bg-[#cdcdcd]" /><span className="flex-[4.4]" />
          <ArrowGlyph d={DOWN} />
        </div>
      </div>
      <div className="flex h-[17px] shrink-0 items-center border-b border-white bg-[#f0f0f0]">
        {["M3 1 V9 M9 1 L4 5 L9 9 Z", "M8 1 L3 5 L8 9 Z", "M3 1 L8 5 L3 9 Z", "M3 1 L8 5 L3 9 Z M9 1 V9"].map((d) => (
          <button type="button" key={d} aria-label="탭 이동" className="flex h-4 w-3.5 shrink-0 items-center justify-center border-r border-[#999]">
            <svg viewBox="0 0 12 10" className="h-2.5 w-3" fill="#555" stroke="#555" aria-hidden="true"><path d={d} /></svg>
          </button>
        ))}
        <Tab active>모형</Tab><Tab>배치1</Tab><Tab>배치2</Tab>
        <span className="flex-[641]" />
        <span className="h-4 w-1.5 bg-[#b8b8b8]" />
        <span className="flex flex-[415] items-center pr-[23px] pl-[5px]">
          <ArrowGlyph d={LEFT} /><span className="flex-[88]" /><span className="h-3.5 w-[17px] bg-[#cdcdcd]" /><span className="flex-[296]" /><ArrowGlyph d={RIGHT} />
        </span>
      </div>
    </div>
  );
}

const Cell = ({ label, w = "w-6", children }) => (
  <button type="button" aria-label={label} className={`${w} flex h-6 shrink-0 items-center justify-center gap-1 text-[#444]`}>{children}</button>
);
const DSep = ({ className = "" }) => <span className={`flex h-5 w-1 shrink-0 justify-center ${className}`}><span className="w-px bg-[#999]" /></span>;
const Glyph = ({ d, w = 1, children }) => (
  <svg viewBox="0 0 16 16" className="size-4 shrink-0 overflow-visible" fill="none" stroke="#555" strokeWidth={w} aria-hidden="true">{d && <path d={d} />}{children}</svg>
);
function DSelect({ label, value, w, bg = "bg-[#e1e1e1]", pad = "pl-5", children }) {
  return (
    <label className={`${w} ${bg} flex h-[22px] shrink-0 items-center border border-[#adadad] pr-1`}>
      {children}
      <select aria-label={label} defaultValue={value} className={`h-5 min-w-0 flex-1 appearance-none bg-transparent ${pad} text-[12px] leading-5 text-black`}><option>{value}</option></select>
      <Chevron className="text-[#444]" />
    </label>
  );
}
function Spin({ label, value }) {
  return (
    <span className="flex h-[22px] w-[70px] shrink-0 border border-[#777] bg-white p-px">
      <input aria-label={label} defaultValue={value} className="h-[17px] w-[51px] min-w-0 pl-px text-[12px] leading-4 text-black" />
      <span className="flex flex-1 flex-col gap-px">
        {["M0 4 L3 0 L6 4 Z", "M0 0 L3 4 L6 0 Z"].map((d) => (
          <button type="button" key={d} aria-label={label} className="flex flex-1 items-center justify-center border border-[#bbb] bg-[#eee]"><svg viewBox="0 0 6 4" className="h-[3px] w-1.5" aria-hidden="true"><path d={d} /></svg></button>
        ))}
      </span>
    </span>
  );
}

function TextDialog() {
  const lines = "M3 2H13 M1 4.5H15 M3 7H13 M1 9.5H15 M3 12H13 M1 14.5H15";
  return (
    <section role="dialog" aria-label="문자 형식" className="absolute top-[343px] left-0 z-20 w-[763px] border-y border-r border-[#666] bg-[#b3b3b3] font-[Liberation_Sans,Noto_Sans_CJK_KR,sans-serif] text-black">
      <div className="border-t border-white py-1.5 pr-1.5">
        <div className="bg-[#f0f0f0]">
          <h2 className="h-[22px] bg-[#99b4d1] pl-0.5 text-[12px] leading-[22px]">문자 형식</h2>
          <div className="flex h-[31px] items-center border-b border-[#999] pb-1">
            <DSep />
            <DSelect label="스타일" value="Standard" w="w-[105px]" />
            <DSep className="mx-px" />
            <DSelect label="글꼴" value="Arial" w="w-36" pad="pl-0.5">
              <span className="relative ml-1 h-4 w-3.5 font-[Liberation_Serif] leading-4"><span className="absolute top-0 left-0 text-[10px] leading-3 font-bold text-[#777]">T</span><span className="absolute top-0.5 left-1 text-[13px] leading-4 font-bold">T</span></span>
            </DSelect>
            <Cell label="주석"><Glyph d="M4 13 L8 3 L12 13 L8 11 Z M6 8 L8 10 L10 8 M3 13 H13" w={1.2} /></Cell>
            <DSep className="mx-px" />
            <DSelect label="높이" value="3,5" w="w-[59px]" pad="pl-0.5" bg="bg-white" />
            <span className="w-px" />
            <Cell label="굵게"><b className="font-[Liberation_Serif] text-[18px]">B</b></Cell>
            <Cell label="기울임"><i className="font-[Liberation_Serif] text-[18px]">I</i></Cell>
            <Cell label="밑줄"><span className="h-[17px] border-b border-[#06c] font-[Liberation_Serif] text-[17px] leading-4">U</span></Cell>
            <Cell label="윗줄"><span className="h-4 border-t border-[#06c] font-[Liberation_Serif] text-[17px] leading-4">O</span></Cell>
            <Cell label="취소"><Glyph d="M3 9 Q6 4 10 5 Q15 7 12 12" w={1.3}><path d="M2 5 V10 H7 Z" fill="#222" stroke="none" /></Glyph></Cell>
            <Cell label="복구"><Glyph d="M13 9 Q10 4 6 5 Q1 7 4 12" w={1.3}><path d="M14 5 V10 H9 Z" fill="#222" stroke="none" /></Glyph></Cell>
            <Cell label="스택"><Glyph d="M1 8.5 H14"><g fontFamily="Liberation Serif" fontSize="11" fontWeight="bold" fill="#333" stroke="none"><text x="3" y="7">b</text><text x="8" y="15">a</text></g></Glyph></Cell>
            <DSep className="mr-px" />
            <DSelect label="색상" value="노란색" w="w-[84px]" pad="pl-1"><span className="ml-1 size-[11px] shrink-0 border border-black bg-[#ff0]" /></DSelect>
            <DSep className="mx-px" />
            <Cell label="눈금자" w="w-[31px]"><Glyph><path d="M0 5 H16 V11 H0 Z M3 5 V8 M6 5 V8 M9 5 V8 M12 5 V8" fill="#ddd" stroke="#666" /></Glyph></Cell>
            <DSep />
            <button type="button" className="h-6 w-[45px] text-[12px]">확인</button>
            <DSep />
            <Cell label="옵션" w="w-[35px]"><Glyph><circle cx="8" cy="8" r="6.5" fill="#fff" stroke="#456a9a" strokeWidth="1.5" /><path d="M5 6.5 L8 10 L11 6.5" stroke="#111" strokeWidth="2.5" /></Glyph></Cell>
          </div>
          <div className="flex h-8 items-center">
            <Cell label="열" w="w-[33px]"><Glyph d="M1 2H7 M1 5H7 M1 8H7 M1 11H15 M1 14H15 M9 5H15 M9 8H15" w={1.8}><path d="M14 1 L2 13" stroke="#111" strokeWidth="3" /></Glyph><Caret c="text-[#777]" /></Cell>
            <DSep />
            <Cell label="자리맞추기" w="w-[39px] pl-1"><Glyph><path d="M2 2 H14 V14 H2 Z" stroke="#222" /><g fill="#fff" stroke="#222"><path d="M1 1h2v2h-2z M13 1h2v2h-2z M1 13h2v2h-2z M13 13h2v2h-2z" /></g><text x="4" y="12" fontSize="11" fill="#333" stroke="#333" strokeWidth=".5" fontFamily="Liberation Sans">A</text></Glyph><Caret c="text-[#222]" /></Cell>
            <DSep />
            <Cell label="단락" w="w-[30px] pl-1"><Glyph d="M1 2H7 M1 5H7 M1 8H7 M1 11H15 M3 14H12 M11 2 V10 M14 2 V10 M15 2 H10 Q7 4 11 6" w={1.2} /></Cell>
            <DSep className="mr-[5px]" />
            <Cell label="왼쪽"><Glyph d={lines} /></Cell><Cell label="중앙"><Glyph d="M2 2H14 M4 4.5H12 M2 7H14 M4 9.5H12 M2 12H14 M4 14.5H12" /></Cell><Cell label="오른쪽"><Glyph d={lines} /></Cell><Cell label="양쪽"><Glyph d={lines} /></Cell>
            <Cell label="분산"><Glyph d="M1 3H15 M4 1 L1 3 L4 5 M12 1 L15 3 L12 5" w={1.3}><path d="M2 8H14 M2 11H14 M2 14H14" strokeDasharray="3 1" /></Glyph></Cell>
            <DSep />
            <Cell label="행 간격" w="w-[39px]"><Glyph d="M3 1 V15 M1 4 L3 1 L5 4 M1 12 L3 15 L5 12 M7 3H15 M7 6H15 M7 9H15 M7 12H15" /><Caret c="text-[#777]" /></Cell>
            <DSep />
            <Cell label="번호" w="w-[39px]"><Glyph d="M2 1V4 M1 7H3V9 M1 12H3V15 M6 3H15 M6 8H15 M6 13H15" /><Caret c="text-[#777]" /></Cell>
            <DSep />
            <Cell label="필드" w="w-[30px] pl-1"><Glyph d="M1 2 H8 V13 H1 Z M3 5H6 M3 8H6 M3 10H6" w={1.3}><path d="M10 6 L12 1 L14 6 M9 9H15 V11 H9 M9 14 H15" stroke="#1670c8" strokeWidth="1.3" /></Glyph></Cell>
            <DSep className="mr-[7px]" />
            <Cell label="대문자"><span className="text-[12px] font-bold">Aa</span></Cell>
            <Cell label="소문자"><span className="text-[12px] font-bold">aA</span></Cell>
            <span className="relative mr-0.5 flex w-[50px] justify-center pl-1">
              <Cell label="기호" w="w-12"><span className="font-[Liberation_Serif] text-[17px] leading-4 font-bold">@</span><Caret c="text-[#222]" /></Cell>
              <span className="pointer-events-none absolute -top-[7px] left-0.5 h-[41px] w-12 border-[5px] border-[#ed1c24]" />
            </span>
            <Cell label="기울기 각도" w="w-[19px]"><span className="font-[Liberation_Serif] text-[16px] italic">0<span className="text-[#06c]">/</span></span></Cell>
            <Spin label="기울기 각도" value="0,0000" />
            <DSep />
            <Cell label="자간" w="w-6"><span className="text-[11px] font-bold">a<span className="text-[#06c]">▪</span>b</span></Cell>
            <Spin label="자간" value="1,0000" />
            <DSep />
            <Cell label="폭 비율" w="w-6 pl-2"><Glyph><ellipse cx="8" cy="9" rx="5.5" ry="3.5" stroke="#444" strokeWidth="2.5" /></Glyph></Cell>
            <Spin label="폭 비율" value="1,0000" />
          </div>
          <div className="h-[3px]" />
        </div>
      </div>
    </section>
  );
}

function CommandLine() {
  return (
    <footer className="relative flex h-[61px] shrink-0 border-t-2 border-[#686868] font-[Liberation_Mono,Noto_Sans_CJK_KR,monospace] text-[17px] text-black">
      <span className="flex w-[15px] shrink-0 items-start rounded-tl bg-[#9e9e9e] pt-1"><Dots /></span>
      <div className="flex min-w-0 flex-1 flex-col bg-white">
        <div className="flex h-9 shrink-0 border-b border-[#999]">
          <p className="flex-1 pl-0.5 leading-7">명령: <span className="text-[18px]">_ddedit</span></p>
          <div className="flex w-4 flex-col items-center justify-between bg-[#f0f0f0] py-1.5"><ArrowGlyph d={UP} /><ArrowGlyph d={DOWN} /></div>
        </div>
        <div className="flex h-[23px]">
          <label className="flex min-w-0 flex-1 pt-1 pl-0.5"><input aria-label="명령 입력" defaultValue="주석 객체 선택 또는 [명령 취소(U)]:" className="h-[22px] w-full leading-[22px] outline-none" /></label>
          <div className="flex w-[70px] items-center justify-between bg-[#f0f0f0] px-1.5"><ArrowGlyph d={LEFT} /><span className="mr-4 h-full w-[17px] bg-[#cdcdcd]" /><ArrowGlyph d={RIGHT} /></div>
          <span className="w-4 bg-[#f0f0f0]" />
        </div>
      </div>
      <span className="pointer-events-none absolute -top-[5px] left-1.5 h-[43px] w-[172px] border-[5px] border-[#ed1c24]" />
    </footer>
  );
}

export default function App() {
  return (
    <div className="relative flex h-screen flex-col overflow-hidden bg-[#686868] font-[Noto_Sans,Noto_Sans_CJK_KR,sans-serif]">
      <Defs />
      <Header />
      <div className="flex min-h-0 flex-1 flex-col border-r-2 border-[#222]">
        <Toolbars />
        <main className="flex min-h-0 flex-1 items-stretch pt-1">
          <div className="flex shrink-0 items-start gap-[3px]">
            <Palette groups={[["line", "xline", "pline", "polygon", "rect", "arc", "circle", "cloud", "spline", "ellipse", "ellipseArc", "insert", "makeBlock", "point", "hatch", "gradient", "region", "table", "mtext"]]} />
            <Palette groups={[["erase", "copyObj", "mirror", "offset", "array", "move", "rotate", "scale", "stretch", "trim", "extend", "breakPt", "breakGap", "join", "chamfer", "fillet", "explode"]]} />
          </div>
          <Viewport />
          <div className="mr-[3px] ml-1 flex shrink-0 items-start gap-[3px]">
            <Palette groups={[["mtext", "textEdit", "textPen", "find", "spell", "textStyle", "scaleText", "justify", "spaceTrans", "annoUpdate"]]} />
            <Palette groups={[["dLinear", "dAligned", "dArc", "dOrd"], ["dRadius", "dJog", "dDia", "dAng"], ["dQuick", "dBase", "dCont", "dSpace", "dBreak"], ["tol", "center", "inspect", "jogLine"], ["dEdit", "dText", "dLinear2"]]} />
          </div>
        </main>
        <CommandLine />
      </div>
      <TextDialog />
    </div>
  );
}
